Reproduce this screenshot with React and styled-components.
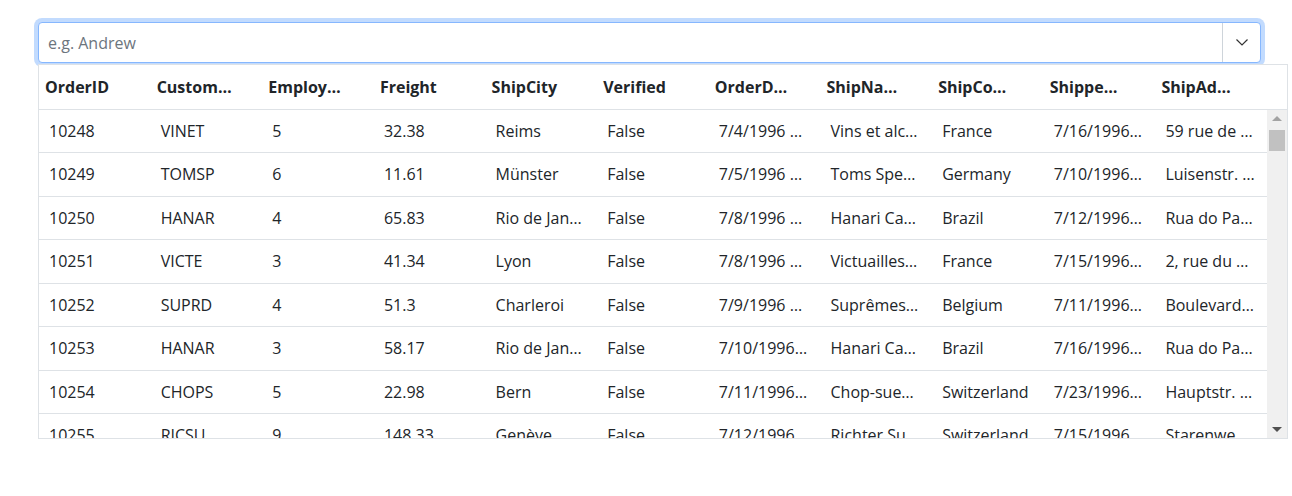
import React from 'react'
import styled, { createGlobalStyle } from 'styled-components'

const GlobalStyle = createGlobalStyle`
body {
  margin: 0;
  background: #fff;
  font-family: "Open Sans", "Noto Sans", sans-serif;
  color: #212529;
}
`

const columns = ['OrderID', 'CustomerID', 'EmployeeID', 'Freight', 'ShipCity', 'Verified', 'OrderDate', 'ShipName', 'ShipCountry', 'ShippedDate', 'ShipAddress']

const rows = [
  ['10248', 'VINET', '5', '32.38', 'Reims', 'False', '7/4/1996 12:00:00 AM', 'Vins et alcools Chevalier', 'France', '7/16/1996 12:00:00 AM', "59 rue de l'Abbaye"],
  ['10249', 'TOMSP', '6', '11.61', 'Münster', 'False', '7/5/1996 12:00:00 AM', 'Toms Spezialitäten', 'Germany', '7/10/1996 12:00:00 AM', 'Luisenstr. 48'],
  ['10250', 'HANAR', '4', '65.83', 'Rio de Janeiro', 'False', '7/8/1996 12:00:00 AM', 'Hanari Carnes', 'Brazil', '7/12/1996 12:00:00 AM', 'Rua do Paço, 67'],
  ['10251', 'VICTE', '3', '41.34', 'Lyon', 'False', '7/8/1996 12:00:00 AM', 'Victuailles en stock', 'France', '7/15/1996 12:00:00 AM', '2, rue du Commerce'],
  ['10252', 'SUPRD', '4', '51.3', 'Charleroi', 'False', '7/9/1996 12:00:00 AM', 'Suprêmes délices', 'Belgium', '7/11/1996 12:00:00 AM', 'Boulevard Tirou, 255'],
  ['10253', 'HANAR', '3', '58.17', 'Rio de Janeiro', 'False', '7/10/1996 12:00:00 AM', 'Hanari Carnes', 'Brazil', '7/16/1996 12:00:00 AM', 'Rua do Paço, 67'],
  ['10254', 'CHOPS', '5', '22.98', 'Bern', 'False', '7/11/1996 12:00:00 AM', 'Chop-suey Chinese', 'Switzerland', '7/23/1996 12:00:00 AM', 'Hauptstr. 31'],
  ['10255', 'RICSU', '9', '148.33', 'Genève', 'False', '7/12/1996 12:00:00 AM', 'Richter Supermarkt', 'Switzerland', '7/15/1996 12:00:00 AM', 'Starenweg 5'],
]

function App() {
  return (
    <Page>
      <GlobalStyle />
      <Combo>
        <Field placeholder="e.g. Andrew" />
        <Toggle>
          <svg width="14" height="9" viewBox="0 0 14 9">
            <polyline points="1.5,1.5 7,7 12.5,1.5" fill="none" stroke="#333" strokeWidth="1.2" />
          </svg>
        </Toggle>
      </Combo>
      <Popup>
        <HeaderRow>
          {columns.map(c => <HeadCell key={c}>{c}</HeadCell>)}
        </HeaderRow>
        <Body>
          <Rows>
            {rows.map(r => (
              <Row key={r[0]}>
                {r.map((v, i) => <Cell key={i}>{v}</Cell>)}
              </Row>
            ))}
          </Rows>
          <Scrollbar>
            <Arrow up />
            <Track>
              <Thumb />
            </Track>
            <Arrow />
          </Scrollbar>
        </Body>
      </Popup>
    </Page>
  )
}

export default App

const Page = styled.div`
padding: 22px 0 0 38px;
`

const Combo = styled.div`
display: flex;
width: 1223px;
height: 41px;
box-sizing: border-box;
border: 1px solid #86b7fe;
border-radius: 4px;
box-shadow: 0 0 0 4px rgba(13, 110, 253, 0.25);
background: #fff;
`

const Field = styled.input`
flex: 1;
border: none;
outline: none;
background: transparent;
padding: 0 9px;
font-family: "Open Sans", "Noto Sans", sans-serif;
font-size: 16px;
color: #212529;
&::placeholder {
  color: #6c757d;
}
`

const Toggle = styled.div`
width: 37px;
border-left: 1px solid #ced4da;
display: flex;
align-items: center;
justify-content: center;
`

const Popup = styled.div`
margin-top: 1px;
width: 1250px;
height: 375px;
box-sizing: border-box;
border: 1px solid #dee2e6;
display: flex;
flex-direction: column;
overflow: hidden;
background: #fff;
`

const HeaderRow = styled.div`
display: flex;
height: 45px;
flex-shrink: 0;
box-sizing: border-box;
border-bottom: 1px solid #dee2e6;
padding-right: 20px;
`

const HeadCell = styled.div`
flex: 1;
min-width: 0;
padding: 1px 28px 0 6px;
font-weight: 700;
font-size: 16px;
line-height: 43px;
color: #212529;
white-space: nowrap;
overflow: hidden;
text-overflow: ellipsis;
`

const Body = styled.div`
flex: 1;
display: flex;
min-height: 0;
`

const Rows = styled.div`
flex: 1;
min-width: 0;
overflow: hidden;
`

const Row = styled.div`
display: flex;
height: 43.43px;
box-sizing: border-box;
border-bottom: 1px solid #dee2e6;
`

const Cell = styled.div`
flex: 1;
min-width: 0;
padding: 1px 12px 0 10px;
font-size: 16px;
line-height: 41px;
color: #212529;
white-space: nowrap;
overflow: hidden;
text-overflow: ellipsis;
`

const Scrollbar = styled.div`
width: 20px;
display: flex;
flex-direction: column;
background: #f0f0f0;
`

const Track = styled.div`
flex: 1;
padding: 3px 2px 0 2px;
`

const Thumb = styled.div`
height: 21px;
background: #c1c1c1;
`

const Arrow = styled.div`
height: 17px;
display: flex;
align-items: center;
justify-content: center;
&::after {
  content: "";
  border-left: 5px solid transparent;
  border-right: 5px solid transparent;
  ${p => p.up ? 'border-bottom: 5px solid #a3a3a3;' : 'border-top: 5px solid #505050;'}
}
`
